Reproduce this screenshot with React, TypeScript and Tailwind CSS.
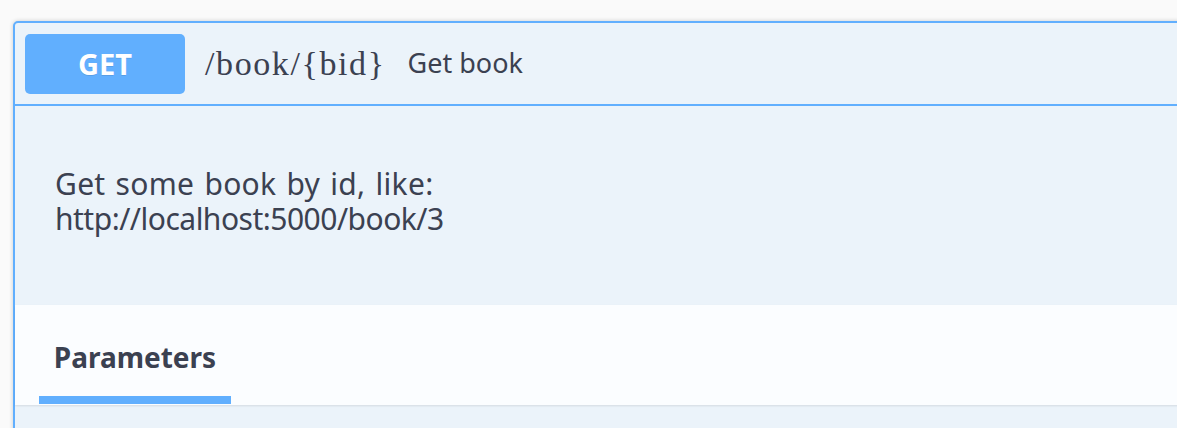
import React from "react";

export default function App() {
  return (
    <div
      className="h-[428px] w-[1177px] overflow-hidden bg-[#fafafa] pl-[13px] pt-[21px] text-[#3b4151]"
      style={{ fontFamily: '"Noto Sans", "Open Sans", sans-serif' }}
    >
      <div className="w-[1200px] rounded-tl-[5px] border-2 border-[#61affe] bg-[#ebf3fa] shadow-[0_0_4px_rgba(0,0,0,0.19)]">
        {/* summary */}
        <div className="flex h-[83px] items-center border-b-2 border-[#61affe] pl-[10px]">
          <div className="flex h-[60px] w-[160px] items-center justify-center rounded-[5px] bg-[#61affe] text-[29px] font-bold text-white [text-shadow:0_1px_0_rgba(0,0,0,0.1)]">
            GET
          </div>
          <span
            className="ml-[20px] text-[34px] tracking-[1.6px] text-[#3b4151]"
            style={{ fontFamily: '"Liberation Serif", serif' }}
          >
            /book/{"{bid}"}
          </span>
          <span className="ml-[22px] text-[27px] text-[#3b4151]">Get book</span>
        </div>
        {/* description */}
        <div className="pl-[40px] pt-[60px] pb-[69px] text-[30px] leading-[35px]">
          <p className="tracking-[0.3px] [word-spacing:2px]">Get some book by id, like:</p>
          <p className="tracking-[-0.5px]">http://localhost:5000/book/3</p>
        </div>
        {/* tab header */}
        <div className="h-[100px] bg-[#fbfdff] pt-[36px] shadow-[0_1px_2px_rgba(0,0,0,0.1)]">
          <div className="ml-[24px] flex w-[192px] flex-col items-center">
            <span className="text-[28px] font-bold leading-[32px]">Parameters</span>
            <div className="mt-[23px] h-[8px] w-full bg-[#61affe]" />
          </div>
        </div>
        <div className="h-[40px]" />
      </div>
    </div>
  );
}
